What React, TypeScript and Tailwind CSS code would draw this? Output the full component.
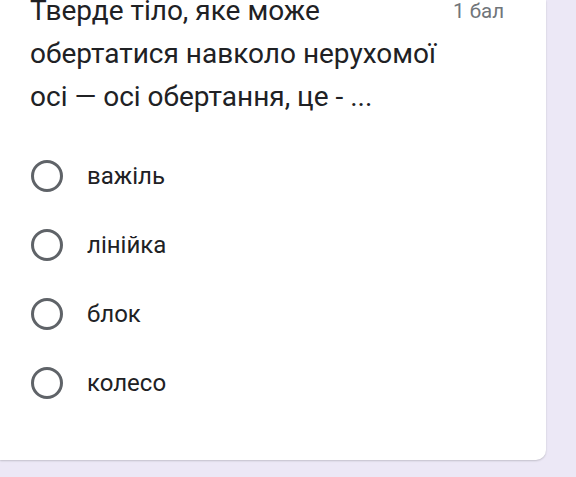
import React from 'react';

const options = ['важіль', 'лінійка', 'блок', 'колесо'];

export default function App() {
  return (
    <div className="w-[576px] h-[477px] overflow-hidden bg-[#ece8f6]" style={{ fontFamily: 'Roboto, "Noto Sans", sans-serif' }}>
      <div className="w-[546px] h-[460px] bg-white rounded-br-[10px] shadow-[0_1px_2px_rgba(0,0,0,0.18)] overflow-hidden">
        <div className="flex justify-between pl-[30px] pr-[42px] -mt-[11px]">
          <div className="text-[28px] leading-[43px] text-[#202124] whitespace-nowrap">
            Тверде тіло, яке може
            <br />
            обертатися навколо нерухомої
            <br />
            осі — осі обертання, це - ...
          </div>
          <div className="text-[20.5px] leading-[43px] text-[#70757a] pt-[1px]">1 бал</div>
        </div>
        <div className="flex flex-col mt-[42px] pl-[31px] gap-[37px]">
          {options.map((o) => (
            <div key={o} className="flex items-center h-[32px]">
              <div className="w-[32px] h-[32px] rounded-full border-[3px] border-[#5f6368]" />
              <span className="ml-[24px] text-[24px] text-[#202124]">{o}</span>
            </div>
          ))}
        </div>
      </div>
    </div>
  );
}
